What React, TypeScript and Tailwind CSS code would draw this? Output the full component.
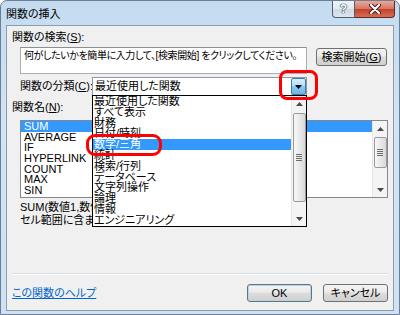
import React from 'react';

const categories = [
  '最近使用した関数',
  'すべて表示',
  '財務',
  '日付/時刻',
  '数学/三角',
  '統計',
  '検索/行列',
  'データベース',
  '文字列操作',
  '論理',
  '情報',
  'エンジニアリング',
];

const functionNames = ['SUM', 'AVERAGE', 'IF', 'HYPERLINK', 'COUNT', 'MAX', 'SIN'];

const Arrow = ({ up }: { up?: boolean }) => (
  <svg width="7" height="4" viewBox="0 0 7 4">
    <path d={up ? 'M0 4 L3.5 0 L7 4 Z' : 'M0 0 L3.5 4 L7 0 Z'} fill="#4a4a4a" />
  </svg>
);

type ScrollbarProps = { thumbTop: number; thumbHeight: number };

const Scrollbar: React.FC<ScrollbarProps> = ({ thumbTop, thumbHeight }) => (
  <div className="flex h-full w-[15px] shrink-0 flex-col border-l border-[#e6e6e6] bg-[#f4f4f4]">
    <div className="flex h-[15px] shrink-0 items-center justify-center">
      <Arrow up />
    </div>
    <div className="flex-1">
      <div
        className="mx-auto flex w-[13px] items-center justify-center rounded-[2px] border border-[#9a9a9a] bg-[linear-gradient(to_right,#f7f7f7,#e9e9e9_50%,#d8d8d8)]"
        style={{ marginTop: thumbTop, height: thumbHeight }}
      >
        <div className="flex flex-col gap-[1px]">
          <div className="h-px w-[6px] bg-[#6c6c6c]" />
          <div className="h-px w-[6px] bg-[#6c6c6c]" />
          <div className="h-px w-[6px] bg-[#6c6c6c]" />
          <div className="h-px w-[6px] bg-[#6c6c6c]" />
        </div>
      </div>
    </div>
    <div className="flex h-[15px] shrink-0 items-center justify-center">
      <Arrow />
    </div>
  </div>
);

const buttonClass =
  'flex h-[18px] w-[65px] shrink-0 items-center justify-center rounded-[3px] border border-[#707070] bg-[linear-gradient(#f3f3f3,#ebebeb_45%,#dddddd_50%,#cfcfcf)] text-[11px] leading-none text-black';

export default function App() {
  return (
    <div className="h-[315px] w-[400px] overflow-hidden whitespace-nowrap bg-white font-['Liberation_Sans','Noto_Sans_CJK_JP',sans-serif] text-[11px] text-black [font-feature-settings:'palt']">
      <div className="flex h-[315px] w-[400px] flex-col rounded-t-[7px] border border-[#6a7e94] bg-[linear-gradient(to_bottom,#c4dbf0,#d3e4f4_40%,#cfe1f2)]">
        {/* title bar */}
        <div className="flex h-[24px] shrink-0 justify-between">
          <div className="pl-[5px] pt-[6px] text-[11px] leading-[14px]">関数の挿入</div>
          <div className="mr-[4px] flex items-start">
            <div className="flex h-[17px] w-[23px] items-center justify-center rounded-bl-[4px] border border-t-0 border-[#4e5d70] bg-[linear-gradient(#eef3f8,#e1e8f0_50%,#cdd8e4_50%,#dce6f0)] text-[12px] font-bold leading-none text-white [text-shadow:0_0_1px_#26313f,0_0_1px_#26313f,0_0_1px_#26313f]">
              ?
            </div>
            <div className="flex h-[17px] w-[40px] items-center justify-center rounded-br-[4px] border border-l-0 border-t-0 border-[#5a2a22] bg-[linear-gradient(#e9a998,#d8735f_50%,#c2402a_50%,#d66c55)]">
              <svg width="12" height="10" viewBox="0 0 12 10">
                <path d="M2 1 L10 9 M10 1 L2 9" stroke="#3b1a14" strokeWidth="4" strokeLinecap="round" />
                <path d="M2 1 L10 9 M10 1 L2 9" stroke="#ffffff" strokeWidth="2.2" strokeLinecap="round" />
              </svg>
            </div>
          </div>
        </div>

        {/* client area */}
        <div className="mx-[5px] flex h-[286px] shrink-0 flex-col overflow-hidden border border-[#8b9db0] bg-[#f0f0f0]">
          <div className="ml-[5px] mt-[4px] h-[14px] leading-[14px]">
            関数の検索(<span className="underline">S</span>):
          </div>

          <div className="mt-[3px] flex items-start">
            <div className="ml-[13px] h-[27px] w-[287px] shrink-0 overflow-hidden border border-[#abadb3] border-t-[#8e8f8f] bg-white pl-[3px] pt-[1px] text-[10px] leading-[14px] tracking-[-0.4px]">
              何がしたいかを簡単に入力して、[検索開始] をクリックしてください。
            </div>
            <div className={`${buttonClass} ml-[9px] mt-[1px] w-[71px]`}>
              検索開始(<span className="underline">G</span>)
            </div>
          </div>

          <div className="mt-[3px] flex h-[19px] items-center">
            <div className="ml-[13px] w-[72px] shrink-0 leading-[19px]">
              関数の分類(<span className="underline">C</span>):
            </div>
            <div className="relative h-[19px] w-[215px] shrink-0">
              <div className="flex h-[19px] w-[215px] items-center border border-[#8e9aa8] bg-white">
                <div className="flex-1 pl-[2px] leading-[15px]">最近使用した関数</div>
                <div className="flex h-[17px] w-[15px] items-center justify-center rounded-[2px] border border-[#3d7bad] bg-[linear-gradient(#d6eefb,#b2dcf5_50%,#8ac8ee_50%,#6db6e4)]">
                  <svg width="7" height="4" viewBox="0 0 7 4">
                    <path d="M0 0 L3.5 4 L7 0 Z" fill="#000" />
                  </svg>
                </div>
              </div>

              {/* open dropdown */}
              <div className="absolute left-0 top-[18px] z-10 flex h-[132px] w-[215px] border border-black bg-white">
                <div className="relative flex-1">
                  {categories.map((name, i) => (
                    <div
                      key={name}
                      className={`h-[10.8px] pl-[1px] leading-[10.8px] ${
                        i === 4 ? 'bg-[#3399ff] text-white' : ''
                      }`}
                    >
                      {name}
                    </div>
                  ))}
                  <div className="absolute left-[-7px] top-[38px] h-[22px] w-[76px] rounded-[9px] border-[3px] border-[#ff0000]" />
                </div>
                <Scrollbar thumbTop={2} thumbHeight={89} />
              </div>

              <div className="absolute left-[187px] top-[-7px] z-20 h-[30px] w-[39px] rounded-[8px] border-[3px] border-[#ff0000]" />
            </div>
          </div>

          <div className="ml-[5px] mt-[4px] h-[14px] leading-[14px]">
            関数名(<span className="underline">N</span>):
          </div>

          <div className="ml-[13px] mt-[6px] flex h-[78px] w-[368px] shrink-0 border border-[#828790] bg-white">
            <div className="flex-1">
              {functionNames.map((name, i) => (
                <div
                  key={name}
                  className={`h-[10.7px] pl-[3px] leading-[10.7px] ${
                    i === 0 ? 'bg-[#3399ff] text-white' : ''
                  }`}
                >
                  {name}
                </div>
              ))}
            </div>
            <Scrollbar thumbTop={1} thumbHeight={31} />
          </div>

          <div className="ml-[13px] mt-[3px] h-[26px] leading-[13px]">
            <div>SUM(数値1,数値2,...)</div>
            <div>セル範囲に含まれる数値をすべて合計します。</div>
          </div>

          <div className="ml-[5px] mt-[46px] h-[2px] w-[376px] shrink-0 border-t border-b border-t-[#d5dfe6] border-b-white" />

          <div className="mt-[9px] flex h-[18px] items-center">
            <div className="ml-[5px] leading-[18px] text-[#0066cc] underline">この関数のヘルプ</div>
            <div className="ml-auto flex gap-[11px] pr-[5px]">
              <div className={`${buttonClass} border-[#3c7fb1] shadow-[inset_0_0_0_1px_#a7d8f5]`}>OK</div>
              <div className={buttonClass}>キャンセル</div>
            </div>
          </div>
        </div>
      </div>
    </div>
  );
}
